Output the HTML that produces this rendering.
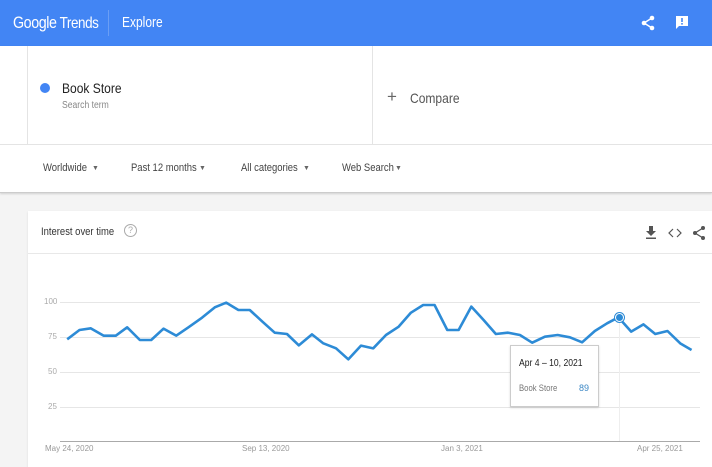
<!DOCTYPE html>
<html><head><style>
*{margin:0;padding:0;box-sizing:border-box}
body{width:712px;height:467px;overflow:hidden;background:#f4f4f4;font-family:"Liberation Sans",sans-serif;position:relative}
.a{position:absolute}
.n{transform:scaleX(.86);transform-origin:0 0;white-space:nowrap}
.ar{position:absolute;font-size:7px;color:#666}
</style></head><body>
<div class="a" style="left:0;top:0;width:712px;height:46px;background:#4285f4;box-shadow:0 1px 2px rgba(0,0,0,.3)"></div>
<div class="a n" style="left:13px;top:13px;color:#fff;font-size:17px;letter-spacing:-0.5px;transform:scaleX(.84)">Google<span style="font-size:16px"> Trends</span></div>
<div class="a" style="left:108px;top:10px;width:1px;height:26px;background:#6a9ef5"></div>
<div class="a n" style="left:122px;top:14px;color:#fff;font-size:15px;transform:scaleX(.8)">Explore</div>
<svg class="a" style="left:640px;top:15px" width="16" height="16" viewBox="0 0 16 16"><circle cx="12" cy="3" r="2.3" fill="#fff"/><circle cx="4" cy="8" r="2.3" fill="#fff"/><circle cx="12" cy="13" r="2.3" fill="#fff"/><path d="M12 3L4 8L12 13" stroke="#fff" stroke-width="1.5" fill="none"/></svg>
<svg class="a" style="left:675px;top:15px" width="14" height="15" viewBox="0 0 14 15"><path d="M1 1H13V11H4L1 14Z" fill="#fff"/><rect x="6.2" y="3" width="1.6" height="4" fill="#4285f4"/><rect x="6.2" y="8" width="1.6" height="1.6" fill="#4285f4"/></svg>
<div class="a" style="left:0;top:46px;width:712px;height:147px;background:#fff;border-bottom:1px solid #ccc;box-shadow:0 1px 2px rgba(0,0,0,.15)"></div>
<div class="a" style="left:27px;top:46px;width:1px;height:99px;background:#e4e4e4"></div>
<div class="a" style="left:372px;top:46px;width:1px;height:99px;background:#e4e4e4"></div>
<div class="a" style="left:0;top:144px;width:712px;height:1px;background:#e4e4e4"></div>
<div class="a" style="left:40px;top:83px;width:10px;height:10px;border-radius:50%;background:#4285f4"></div>
<div class="a n" style="left:62px;top:80px;font-size:14px;color:#222">Book Store</div>
<div class="a n" style="left:62px;top:100px;font-size:10px;color:#888">Search term</div>
<div class="a" style="left:387px;top:87px;font-size:17px;color:#666">+</div>
<div class="a n" style="left:410px;top:90px;font-size:14px;color:#555">Compare</div>
<div class="a n" style="left:43px;top:162px;font-size:11px;color:#444">Worldwide</div><span class="ar" style="left:92px;top:165px">▼</span>
<div class="a n" style="left:131px;top:162px;font-size:11px;color:#444">Past 12 months</div><span class="ar" style="left:199px;top:165px">▼</span>
<div class="a n" style="left:241px;top:162px;font-size:11px;color:#444">All categories</div><span class="ar" style="left:303px;top:165px">▼</span>
<div class="a n" style="left:342px;top:162px;font-size:11px;color:#444">Web Search</div><span class="ar" style="left:395px;top:165px">▼</span>
<div class="a" style="left:28px;top:211px;width:684px;height:256px;background:#fff;box-shadow:0 1px 2px rgba(0,0,0,.1)"></div>
<div class="a" style="left:28px;top:253px;width:684px;height:1px;background:#e8e8e8"></div>
<div class="a n" style="left:41px;top:226px;font-size:11px;color:#333">Interest over time</div>
<div class="a" style="left:124px;top:224px;width:13px;height:13px;border:1px solid #aaa;border-radius:50%;font-size:9px;color:#aaa;text-align:center;line-height:11px">?</div>
<svg class="a" style="left:645px;top:225px" width="12" height="15" viewBox="0 0 12 15"><path d="M4 1H8V6H11L6 11L1 6H4Z" fill="#555"/><rect x="1" y="12.5" width="10" height="1.5" fill="#555"/></svg>
<svg class="a" style="left:668px;top:227px" width="14" height="12" viewBox="0 0 14 12"><path d="M5 2L1 6L5 10M9 2L13 6L9 10" stroke="#555" stroke-width="1.2" fill="none"/></svg>
<svg class="a" style="left:692px;top:225px" width="14" height="16" viewBox="0 0 14 16"><circle cx="11" cy="3" r="2" fill="#555"/><circle cx="3" cy="8" r="2" fill="#555"/><circle cx="11" cy="13" r="2" fill="#555"/><path d="M11 3L3 8L11 13" stroke="#555" stroke-width="1.3" fill="none"/></svg>
<div class="a" style="left:60px;top:302px;width:640px;height:1px;background:#e6e6e6"></div>
<div class="a" style="left:60px;top:337px;width:640px;height:1px;background:#e6e6e6"></div>
<div class="a" style="left:60px;top:372px;width:640px;height:1px;background:#e6e6e6"></div>
<div class="a" style="left:60px;top:407px;width:640px;height:1px;background:#e6e6e6"></div>
<div class="a" style="left:60px;top:441px;width:640px;height:1px;background:#aaa"></div>
<div class="a" style="left:619px;top:318px;width:1px;height:123px;background:#eee"></div>
<div class="a" style="left:44px;top:297px;font-size:8px;color:#aaa">100</div>
<div class="a" style="left:48px;top:332px;font-size:8px;color:#aaa">75</div>
<div class="a" style="left:48px;top:367px;font-size:8px;color:#aaa">50</div>
<div class="a" style="left:48px;top:402px;font-size:8px;color:#aaa">25</div>
<div class="a" style="left:45px;top:444px;font-size:8px;color:#999">May 24, 2020</div>
<div class="a" style="left:242px;top:444px;font-size:8px;color:#999">Sep 13, 2020</div>
<div class="a" style="left:441px;top:444px;font-size:8px;color:#999">Jan 3, 2021</div>
<div class="a" style="left:637px;top:444px;font-size:8px;color:#999">Apr 25, 2021</div>
<svg class="a" style="left:0;top:200px" width="712" height="267" viewBox="0 0 1568 801" preserveAspectRatio="none">
<polyline fill="none" stroke="#2d8bd6" stroke-width="2.6" vector-effect="non-scaling-stroke" stroke-linejoin="round" points="148,418 175,390 200,385 228,407 255,407 280,382 308,420 333,420 360,386 388,407 415,382 445,353 473,322 498,308 525,330 550,330 578,365 605,398 632,402 658,436 687,403 712,430 740,445 767,478 795,437 822,445 850,405 878,380 905,338 932,315 957,315 985,390 1010,390 1038,320 1065,360 1092,402 1118,398 1145,405 1172,428 1200,410 1228,405 1255,412 1282,427 1310,393 1337,370 1362,352 1390,395 1417,373 1443,402 1470,393 1498,430 1523,450"/>
</svg>
<div class="a" style="left:615px;top:313px;width:9px;height:9px;border-radius:50%;background:#2d8bd6;border:1.5px solid #fff;box-shadow:0 0 0 1px #2d8bd6"></div>
<div class="a" style="left:510px;top:345px;width:89px;height:62px;background:#fff;border:1px solid #ccc;box-shadow:0 1px 2px rgba(0,0,0,.15)"></div>
<div class="a n" style="left:519px;top:358px;font-size:10px;color:#222">Apr 4 – 10, 2021</div>
<div class="a n" style="left:519px;top:383px;font-size:9px;color:#777">Book Store</div>
<div class="a" style="left:579px;top:383px;font-size:9px;color:#3b87c4">89</div>
</body></html>
